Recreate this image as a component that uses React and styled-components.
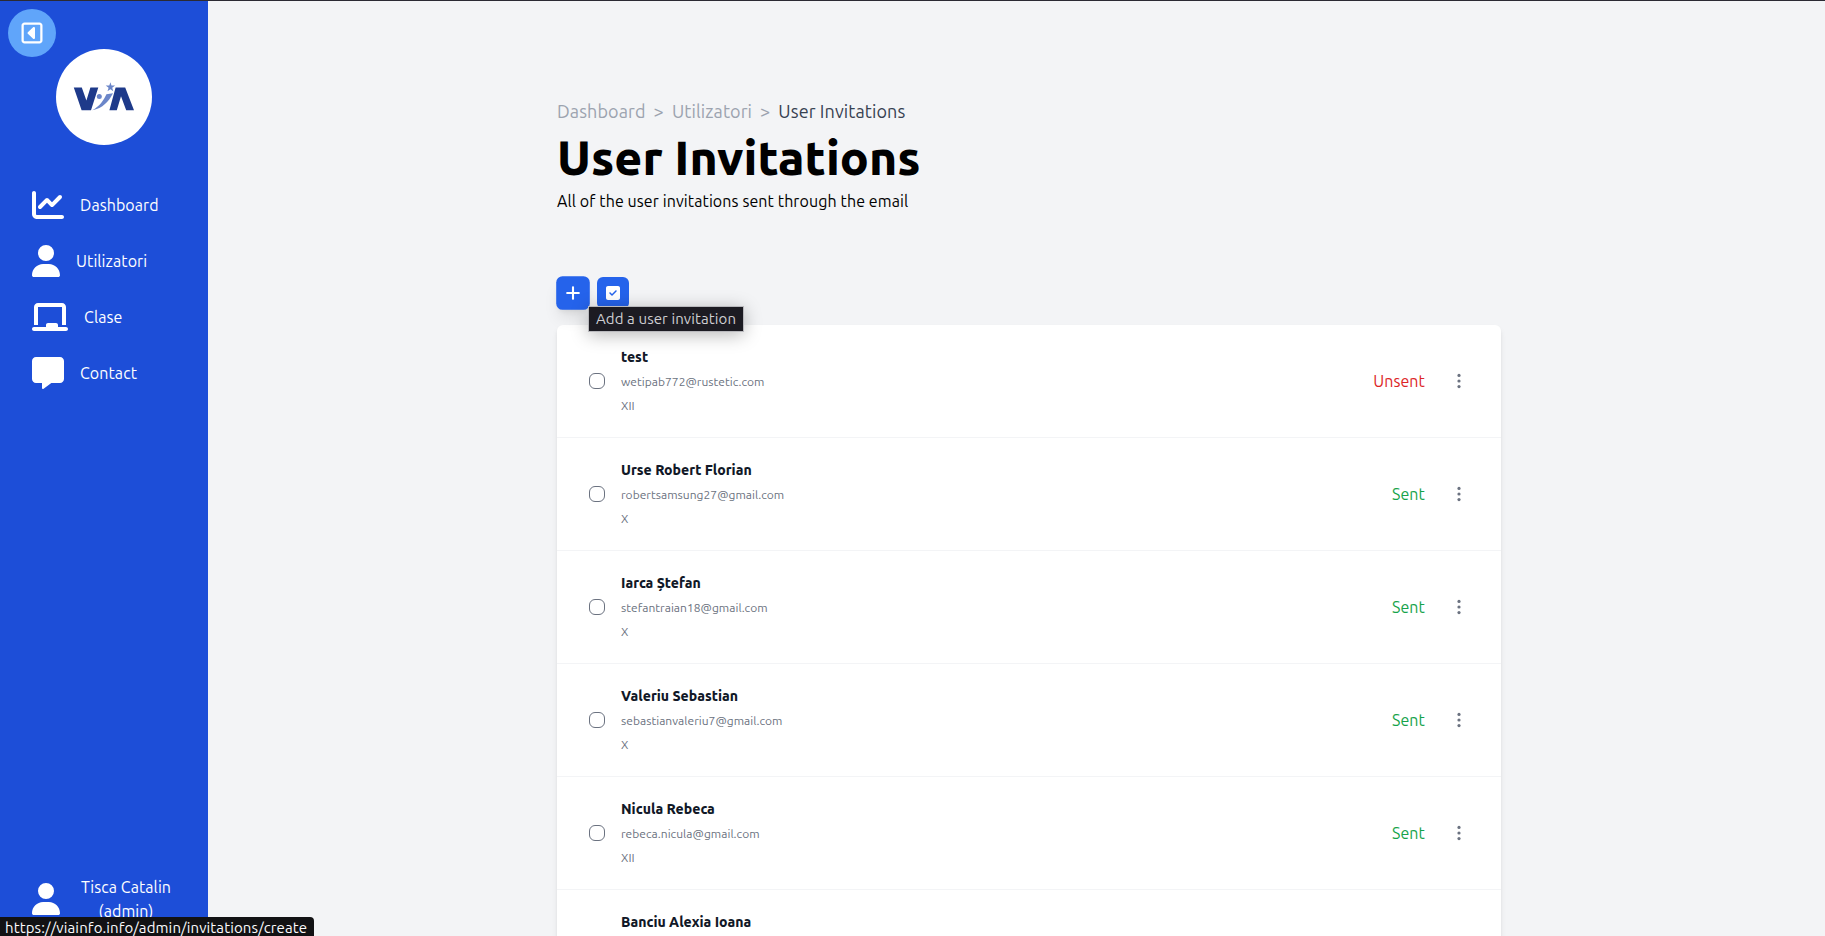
import React from 'react';
import styled, { createGlobalStyle, css } from 'styled-components';
import {
  FaChartLine, FaUser, FaChalkboard, FaMessage, FaRegSquareCaretLeft,
  FaPlus, FaSquareCheck,
} from 'react-icons/fa6';

const GlobalStyle = createGlobalStyle`
  *, *::before, *::after { box-sizing: border-box; }
  html, body { margin: 0; height: 100%; overflow: hidden; }
  body {
    font-family: Ubuntu, "Noto Sans", sans-serif;
    font-size: 16px;
    line-height: 24px;
    color: #000;
    background: #f3f4f6;
  }
  h1, p, ul, ol { margin: 0; padding: 0; list-style: none; }
  a { color: inherit; text-decoration: none; }
  button { font: inherit; }
  svg { display: block; flex: none; }
`;

const Page = styled.div`
  display: flex;
  height: 936px;
  overflow: hidden;
  border-top: 1px solid #2b2a33;
  position: relative;
`;

const Sidebar = styled.aside`
  width: 208px;
  flex: none;
  display: flex;
  flex-direction: column;
  background: #1d4ed8;
  color: #fff;
  position: relative;
`;

const CollapseButton = styled.button`
  position: absolute;
  top: 8px;
  left: 8px;
  width: 48px;
  height: 48px;
  display: grid;
  place-items: center;
  border: 0;
  border-radius: 50%;
  background: #60a5fa;
  color: #fff;
`;

const LogoBadge = styled.div`
  width: 96px;
  height: 96px;
  margin: 48px auto 0;
  display: grid;
  place-items: center;
  border-radius: 50%;
  background: #fff;
`;

const Nav = styled.nav`
  margin-top: 32px;
  flex: 1;
`;

/* Icons share a height; each keeps the natural width of its glyph. */
const SidebarIcon = styled.span`
  flex: none;
  svg {
    width: ${(p) => p.$width}px;
    height: 32px;
  }
`;

const NavItem = styled.a`
  display: flex;
  align-items: center;
  gap: 16px;
  height: 56px;
  padding: 0 32px;
  letter-spacing: 0.08px;
`;

const Account = styled.a`
  display: flex;
  align-items: center;
  gap: 16px;
  padding: 0 32px;
  margin-bottom: 13px;
  text-align: center;
  letter-spacing: 0.08px;
`;

const AccountName = styled.span`
  flex: 1;
`;

const Main = styled.main`
  flex: 1;
  padding: 95px 324px 0 349px;
`;

const Breadcrumbs = styled.ol`
  display: flex;
  gap: 8px;
  height: 30px;
  align-items: center;
  font-size: 18px;
  letter-spacing: 0.1px;
  color: #9ca3af;
`;

const Crumb = styled.li`
  ${(p) => p.$current && css`color: #374151;`}
`;

const Title = styled.h1`
  margin-top: 1px;
  font-size: 48px;
  line-height: 60px;
  font-weight: 800;
  letter-spacing: 0.06px;
`;

const Subtitle = styled.p`
  margin-top: 2px;
  letter-spacing: 0.1px;
`;

const Toolbar = styled.div`
  display: flex;
  gap: 8px;
  margin-top: 64px;
  position: relative;
`;

const ToolButton = styled.button`
  width: 32px;
  height: 32px;
  display: grid;
  place-items: center;
  border: 0;
  padding: 0;
  border-radius: 6px;
  background: #2563eb;
  color: #fff;
  ${(p) => p.$hovered && css`
    transform: scale(1.05);
    box-shadow: 0 10px 15px -3px rgb(0 0 0 / 0.1), 0 4px 6px -4px rgb(0 0 0 / 0.1);
  `}
`;

const Tooltip = styled.div`
  position: absolute;
  z-index: 2;
  left: 31px;
  top: 29px;
  width: 156px;
  height: 26px;
  border: 1px solid #b9b9bd;
  background: #1c1b22;
  color: #cfcfd2;
  font-size: 15px;
  line-height: 24px;
  padding-left: 7px;
  letter-spacing: 0.1px;
  white-space: nowrap;
  box-shadow: 0 3px 18px rgb(0 0 0 / 0.28);
`;

const Card = styled.ul`
  margin-top: 16px;
  background: #fff;
  border-radius: 6px;
  box-shadow: 0 4px 6px -1px rgb(0 0 0 / 0.1), 0 2px 4px -2px rgb(0 0 0 / 0.1);
`;

const Row = styled.li`
  display: flex;
  align-items: center;
  height: 113px;
  padding: 0 40px 0 32px;
  border-bottom: 1px solid #f3f4f6;
`;

const Checkbox = styled.input`
  appearance: none;
  width: 16px;
  height: 16px;
  margin: 0 16px 0 0;
  border: 1px solid #6b7280;
  border-radius: 6px;
  background: #fff;
`;

const Person = styled.div`
  flex: 1;
`;

const Name = styled.p`
  font-size: 14px;
  font-weight: 800;
  line-height: 25px;
  color: #111827;
`;

const Detail = styled.p`
  font-size: 12px;
  line-height: 24px;
  min-height: 24px;
  color: #6b7280;
  letter-spacing: 0.04px;
`;

const Status = styled.span`
  color: ${(p) => (p.$sent ? '#16a34a' : '#dc2626')};
  margin-right: 32px;
  letter-spacing: 0.1px;
`;

const MenuButton = styled.button`
  border: 0;
  padding: 0;
  background: none;
  color: #6b7280;
`;

const LinkPreview = styled.div`
  position: absolute;
  left: 0;
  bottom: 0;
  width: 314px;
  height: 19px;
  padding-left: 5px;
  border-top-right-radius: 4px;
  background: #121214;
  color: #fbfbfe;
  font-size: 15px;
  line-height: 21px;
  letter-spacing: 0.12px;
  white-space: nowrap;
`;

const navItems = [
  { label: 'Dashboard', Icon: FaChartLine, width: 32 },
  { label: 'Utilizatori', Icon: FaUser, width: 28 },
  { label: 'Clase', Icon: FaChalkboard, width: 36 },
  { label: 'Contact', Icon: FaMessage, width: 32 },
];

const invitations = [
  { name: 'test', email: 'wetipab772@rustetic.com', grade: 'XII', sent: false },
  { name: 'Urse Robert Florian', email: 'robertsamsung27@gmail.com', grade: 'X', sent: true },
  { name: 'Iarca Ștefan', email: 'stefantraian18@gmail.com', grade: 'X', sent: true },
  { name: 'Valeriu Sebastian', email: 'sebastianvaleriu7@gmail.com', grade: 'X', sent: true },
  { name: 'Nicula Rebeca', email: 'rebeca.nicula@gmail.com', grade: 'XII', sent: true },
  { name: 'Banciu Alexia Ioana' },
];

const Logo = () => (
  <svg width="62" height="30" viewBox="0 0 62 30">
    <g fill="#1e3a8a">
      <path d="M0.8 5.5H8.8L13.4 18.5L17.4 5.5H25.3L18 28.3H8.6Z" />
      <path d="M42.6 5.5H52.2L61 28.3H53.2L48 14.2L43.8 28.3H36.4Z" />
    </g>
    <g fill="#6b86c9">
      <circle cx="26.3" cy="14.5" r="2.5" />
      <path d="M37.4 0.3l1.1 3.3h3.6l-2.9 2.1 1.1 3.6-2.9-2.1-2.9 2.1 1.1-3.6-2.9-2.1h3.6z" />
      <path d="M19.2 28.3C27 24 30.6 18.2 33.4 12.2L40 11.2C35.6 19.6 30 26 19.2 28.3Z" />
    </g>
  </svg>
);

const DotsIcon = () => (
  <svg width="4" height="16" viewBox="0 0 4 16" fill="currentColor">
    <circle cx="2" cy="2.4" r="1.6" />
    <circle cx="2" cy="8" r="1.6" />
    <circle cx="2" cy="13.6" r="1.6" />
  </svg>
);

export default function App() {
  return (
    <>
      <GlobalStyle />
      <Page>
        <Sidebar>
          <CollapseButton aria-label="Collapse"><FaRegSquareCaretLeft size={24} /></CollapseButton>
          <LogoBadge><Logo /></LogoBadge>
          <Nav>
            {navItems.map(({ label, Icon, width }) => (
              <NavItem key={label}>
                <SidebarIcon $width={width}><Icon /></SidebarIcon>
                <span>{label}</span>
              </NavItem>
            ))}
          </Nav>
          <Account>
            <SidebarIcon $width={28}><FaUser /></SidebarIcon>
            <AccountName>Tisca Catalin (admin)</AccountName>
          </Account>
        </Sidebar>
        <Main>
          <Breadcrumbs>
            <Crumb>Dashboard</Crumb>
            <li>&gt;</li>
            <Crumb>Utilizatori</Crumb>
            <li>&gt;</li>
            <Crumb $current>User Invitations</Crumb>
          </Breadcrumbs>
          <Title>User Invitations</Title>
          <Subtitle>All of the user invitations sent through the email</Subtitle>
          <Toolbar>
            <ToolButton $hovered><FaPlus size={16} /></ToolButton>
            <ToolButton><FaSquareCheck size={16} /></ToolButton>
            <Tooltip>Add a user invitation</Tooltip>
          </Toolbar>
          <Card>
            {invitations.map(({ name, email, grade, sent }) => (
              <Row key={name}>
                <Checkbox type="checkbox" />
                <Person>
                  <Name>{name}</Name>
                  <Detail>{email}</Detail>
                  <Detail>{grade}</Detail>
                </Person>
                {email && <Status $sent={sent}>{sent ? 'Sent' : 'Unsent'}</Status>}
                <MenuButton aria-label="Actions"><DotsIcon /></MenuButton>
              </Row>
            ))}
          </Card>
        </Main>
        <LinkPreview>https://viainfo.info/admin/invitations/create</LinkPreview>
      </Page>
    </>
  );
}
